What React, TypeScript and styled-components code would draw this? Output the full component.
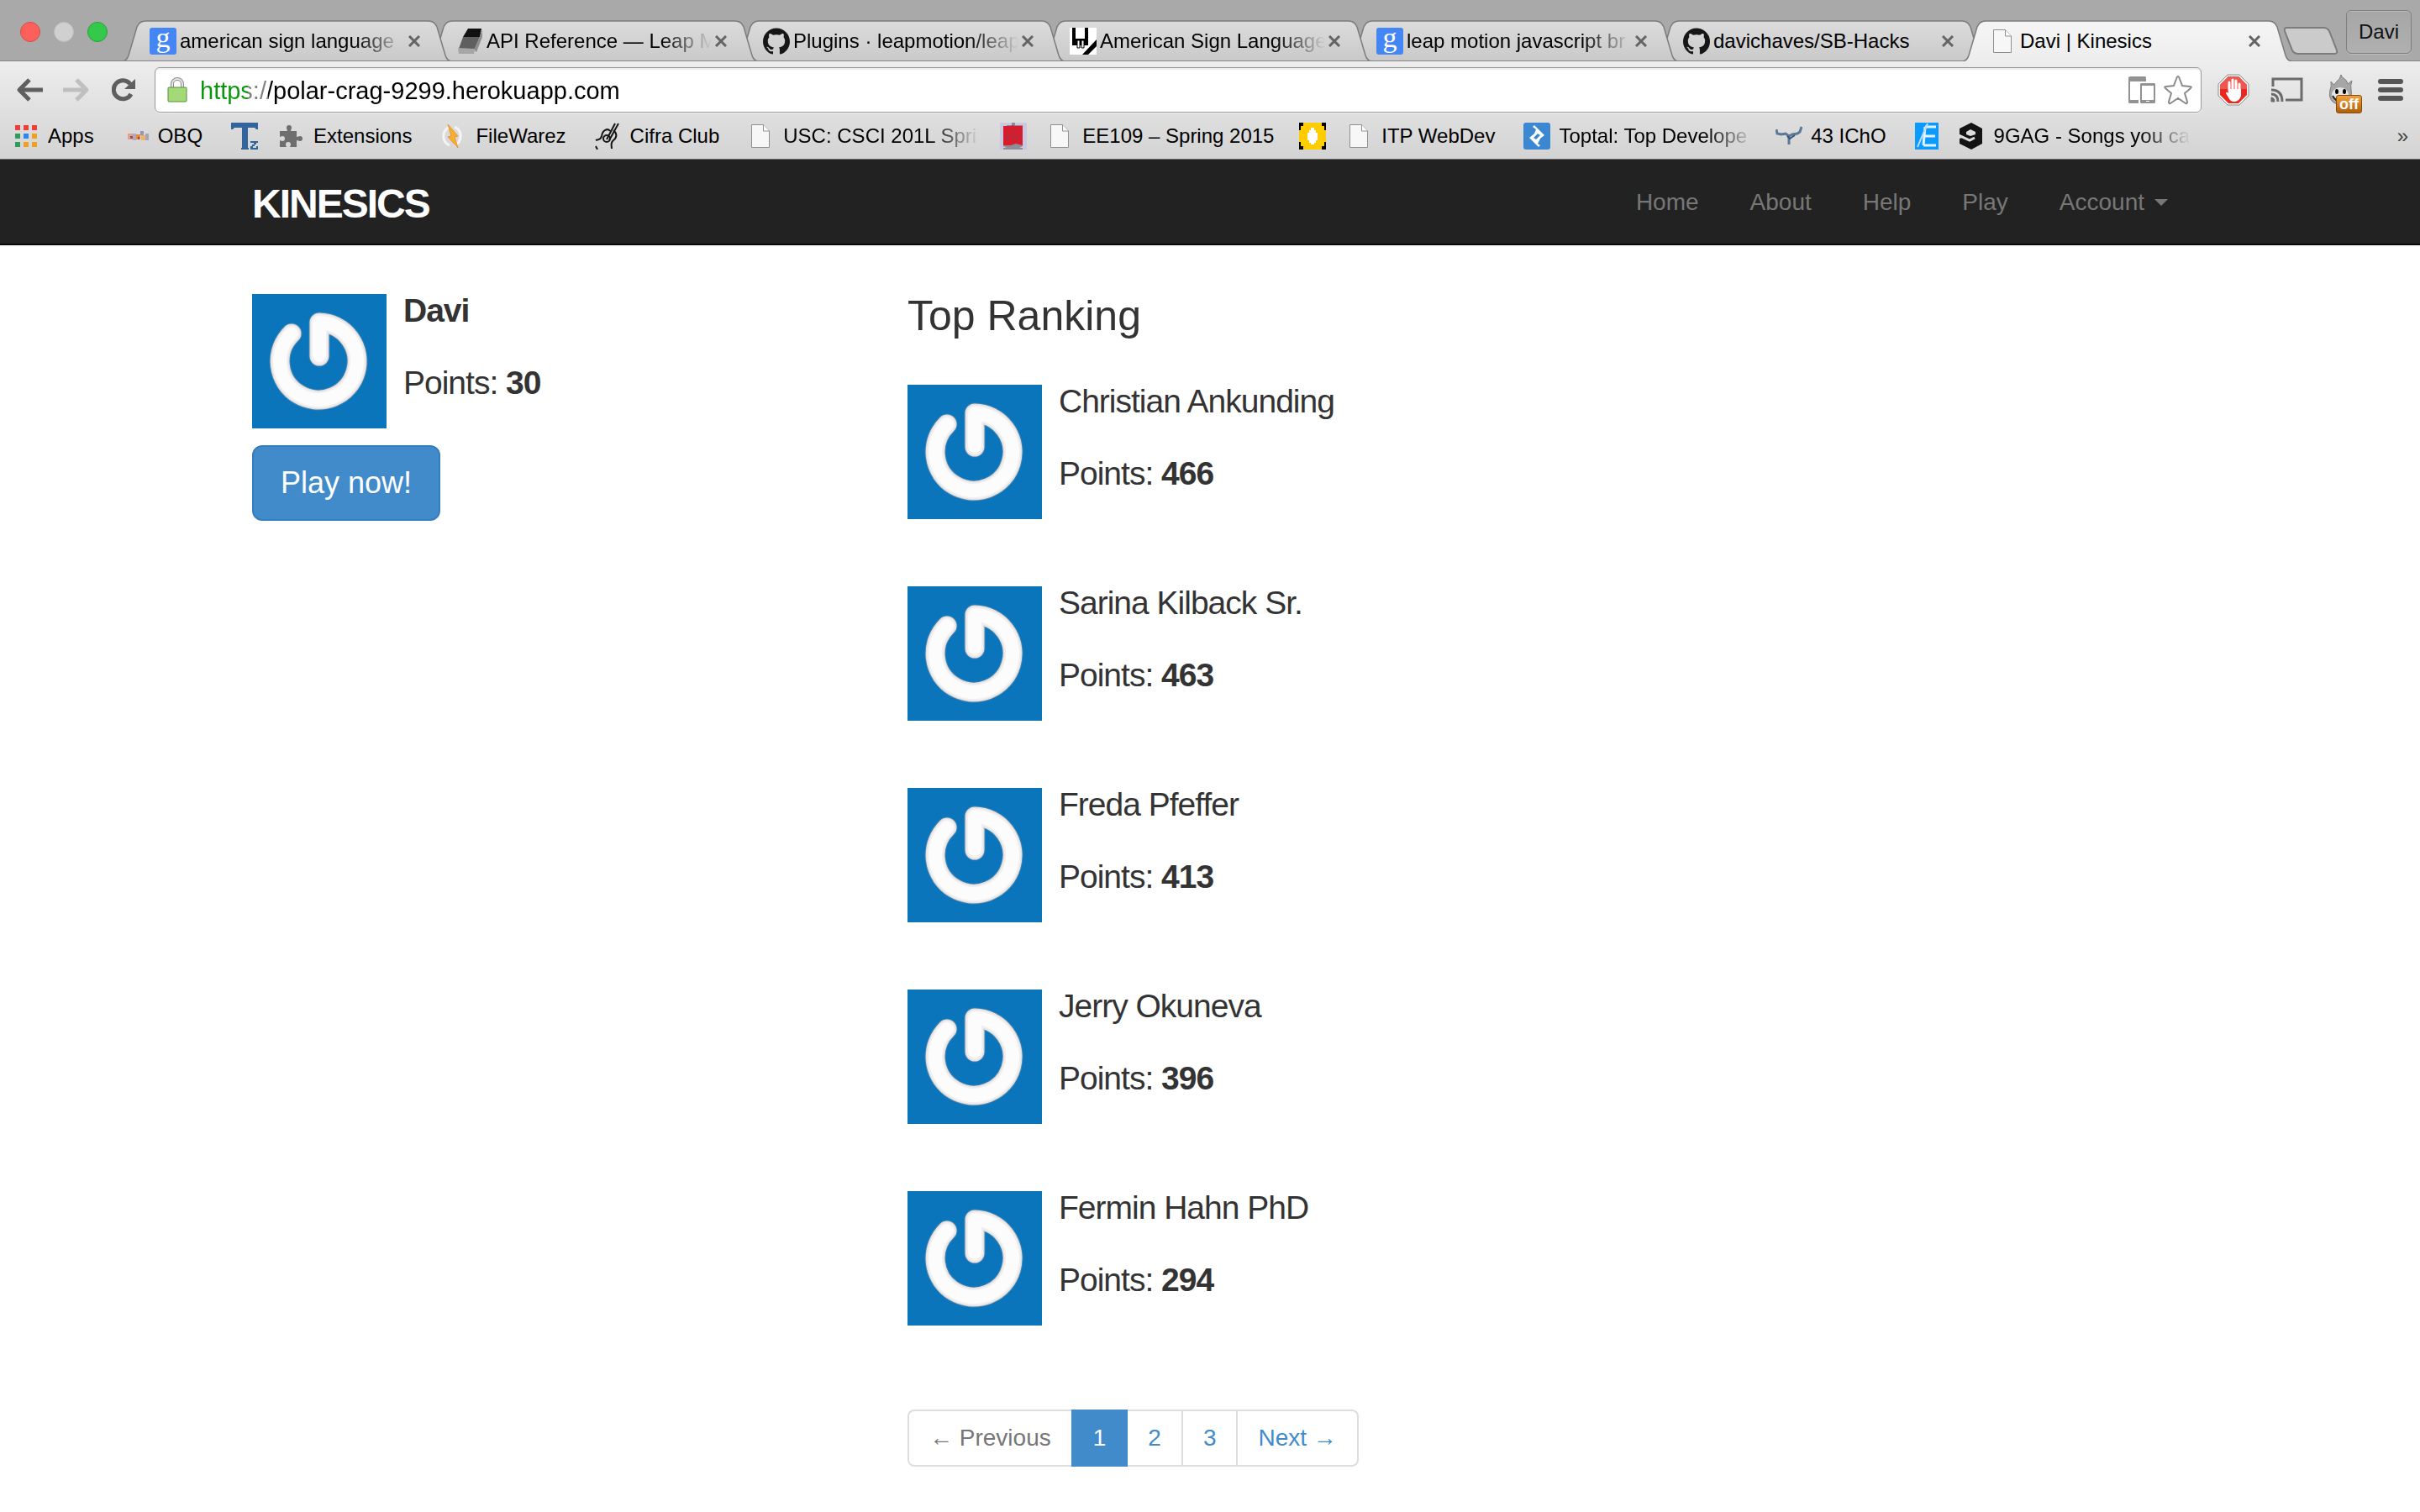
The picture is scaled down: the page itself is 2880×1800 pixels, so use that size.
import React from "react";
import styled, { createGlobalStyle, css } from "styled-components";

const GlobalStyle = createGlobalStyle`
  *, *::before, *::after { box-sizing: border-box; }
  body {
    margin: 0;
    background: #fff;
    color: #333;
    font-family: "Liberation Sans", Arial, sans-serif;
    font-size: 28px;
    line-height: 40px;
  }
  a { color: inherit; text-decoration: none; }
  button, input { font: inherit; color: inherit; }
  h1, h2, p, ul, ol { margin: 0; padding: 0; font-weight: normal; }
  ul, ol { list-style: none; }
  svg { display: block; flex: none; }
`;

/* ---------- Browser window: tab strip ---------- */

const TabStrip = styled.header`
  position: relative;
  display: flex;
  height: 73px;
  padding-right: 10px;
  background: #a9a9a9;
  font-size: 24px;
  line-height: 28px;
  &::after {
    content: "";
    position: absolute;
    left: 0;
    right: 0;
    bottom: 0;
    height: 1px;
    background: #858585;
    z-index: 10;
  }
`;

const WindowControls = styled.div`
  display: flex;
  gap: 16px;
  padding: 26px 18px 0 24px;
`;

const WindowButton = styled.button<{ $fill: string; $edge: string }>`
  width: 24px;
  height: 24px;
  padding: 0;
  border: 1px solid ${(p) => p.$edge};
  border-radius: 50%;
  background: ${(p) => p.$fill};
`;

const Tabs = styled.div`
  display: flex;
  flex: 0 1 2581px;
  min-width: 0;
  padding-top: 24px;
`;

const TabBox = styled.div<{ $order: number }>`
  position: relative;
  display: flex;
  align-items: center;
  flex: 1 1 0;
  min-width: 0;
  height: 49px;
  padding: 0 37px 0 32px;
  z-index: ${(p) => p.$order};
  & + & { margin-left: -26px; }
`;

const TabOutline = styled.svg`
  position: absolute;
  inset: 0;
  width: 100%;
  height: 100%;
  z-index: -1;
`;

const fade = css`
  mask-image: linear-gradient(to right, #000 calc(100% - 60px), transparent);
`;

const TabTitle = styled.span<{ $faded?: boolean }>`
  flex: 1;
  min-width: 0;
  margin: 0 4px 0 4px;
  overflow: hidden;
  white-space: nowrap;
  color: #000;
  ${(p) => p.$faded && fade}
`;

const TabClose = styled.button`
  flex: none;
  width: 14px;
  padding: 0;
  border: 0;
  background: none;
`;

const NewTab = styled.button`
  align-self: flex-start;
  flex: none;
  margin: 32px 8px 0 -10px;
  padding: 0;
  border: 0;
  background: none;
`;

const ProfileButton = styled.button`
  flex: none;
  align-self: flex-start;
  height: 52px;
  margin-top: 12px;
  margin-left: auto;
  padding: 0 14px;
  border: 1px solid #7e7e7e;
  border-radius: 6px;
  background: linear-gradient(#a6a6a6, #b0b0b0);
  color: #111;
  box-shadow: inset 0 1px 0 #bcbcbc, 0 1px 0 #bcbcbc;
`;

/* ---------- Browser window: toolbar ---------- */

const Chrome = styled.div`
  background: linear-gradient(#ededed, #d3d3d3);
  border-bottom: 1px solid #6d6d6d;
`;

const Toolbar = styled.div`
  display: flex;
  align-items: center;
  padding: 7px 20px 2px 18px;
`;

const HistoryButtons = styled.div`
  display: flex;
  gap: 22px;
  margin-right: 20px;
`;

const IconButton = styled.button<{ $size: number }>`
  position: relative;
  display: grid;
  place-items: center;
  flex: none;
  width: ${(p) => p.$size}px;
  height: 40px;
  padding: 0;
  border: 0;
  background: none;
`;

const Omnibox = styled.div`
  display: flex;
  align-items: center;
  flex: 1;
  min-width: 0;
  height: 54px;
  padding: 0 4px 0 14px;
  border: 1px solid #999;
  border-radius: 6px;
  background: #fff;
  box-shadow: inset 0 2px 1px #ededed, 0 1px 0 #f2f2f2;
`;

const UrlInput = styled.input`
  flex: 1;
  min-width: 0;
  height: 40px;
  margin-left: 15px;
  padding: 2px 0 0;
  border: 0;
  outline: 0;
  font-size: 29px;
  color: transparent;
  background: linear-gradient(to right, #0a960a 57px, #808080 57px 81px, #000 81px);
  background-clip: text;
`;

const Extensions = styled.div`
  display: flex;
  gap: 24px;
  margin-left: 18px;
`;

const OffBadge = styled.span`
  position: absolute;
  left: 14px;
  top: 26px;
  height: 22px;
  padding: 0 3px;
  border: 1px solid #8a4a05;
  border-radius: 3px;
  background: linear-gradient(#f3a13c, #b15f08);
  color: #fff;
  font-size: 18px;
  font-weight: bold;
  line-height: 20px;
`;

const BookmarkBar = styled.nav`
  display: flex;
  align-items: center;
  gap: 24px;
  height: 53px;
  padding: 0 14px 2px 15px;
  color: #000;
  font-size: 24px;
  line-height: 30px;
`;

const BookmarkLink = styled.a`
  display: flex;
  align-items: center;
  flex: none;
  gap: 10px;
`;

const BookmarkLabel = styled.span<{ $faded?: boolean }>`
  max-width: 234px;
  padding-right: 10px;
  overflow: hidden;
  white-space: nowrap;
  ${(p) => p.$faded && fade}
`;

const MoreBookmarks = styled.button`
  margin-left: auto;
  padding: 0;
  border: 0;
  background: none;
  color: #444;
`;

/* ---------- Site icons ---------- */

const GoogleTile = styled.span`
  display: block;
  flex: none;
  width: 32px;
  height: 32px;
  border-radius: 3px;
  background: #4486f4;
  color: #fff;
  font-family: "Liberation Serif", serif;
  font-size: 34px;
  line-height: 24px;
  text-align: center;
`;

const GoogleIcon = () => <GoogleTile aria-hidden>g</GoogleTile>;

const LeapIcon = () => (
  <svg width="32" height="32" viewBox="0 0 32 32">
    <path d="M14 1h16l-2 10H8z" fill="#111" />
    <path d="M8 11h20l-6 14H3z" fill="#5f5f5f" />
    <path d="M28 11l3-9v9l-7 18-3-3z" fill="#8d8d8d" />
    <path d="M2 24l20 1-1 6H3z" fill="#a6a6a6" />
  </svg>
);

const GithubIcon = () => (
  <svg width="32" height="32" viewBox="0 0 24 24" fill="#161616">
    <path d="M12 .297c-6.63 0-12 5.373-12 12 0 5.303 3.438 9.8 8.205 11.385.6.113.82-.258.82-.577 0-.285-.01-1.04-.015-2.04-3.338.724-4.042-1.61-4.042-1.61C4.422 18.07 3.633 17.7 3.633 17.7c-1.087-.744.084-.729.084-.729 1.205.084 1.838 1.236 1.838 1.236 1.07 1.835 2.809 1.305 3.495.998.108-.776.417-1.305.76-1.605-2.665-.3-5.466-1.332-5.466-5.93 0-1.31.465-2.38 1.235-3.22-.135-.303-.54-1.523.105-3.176 0 0 1.005-.322 3.3 1.23.96-.267 1.98-.399 3-.405 1.02.006 2.04.138 3 .405 2.28-1.552 3.285-1.23 3.285-1.23.645 1.653.24 2.873.12 3.176.765.84 1.23 1.91 1.23 3.22 0 4.61-2.805 5.625-5.475 5.92.42.36.81 1.096.81 2.22 0 1.606-.015 2.896-.015 3.286 0 .315.21.69.825.57C20.565 22.092 24 17.592 24 12.297c0-6.627-5.373-12-12-12" />
  </svg>
);

const SignIcon = () => (
  <svg width="32" height="32" viewBox="0 0 32 32">
    <path d="M0 0h32v32H0z" fill="#fff" />
    <path d="M3 0h4v13h11V0h4v21H3z" />
    <path d="M9 0h7v12H9z" fill="#fff" />
    <path d="M9 15h3v9H9zM14 15h3v9h-3z" fill="#fff" stroke="#000" strokeWidth="1" />
    <path d="M32 14v8L22 32h-7z" />
  </svg>
);

const PageIcon = () => (
  <svg width="32" height="32" viewBox="0 0 32 32">
    <path d="M4.500 2.500h14l7 7.500v19.500h-21z" fill="#f7f7f7" stroke="#909090" />
    <path d="M18.500 2.500v7.500h7" fill="#fff" stroke="#909090" />
  </svg>
);

const AppsIcon = () => {
  const colors = ["#f23c38", "#f23c38", "#f23c38", "#2f9c5b", "#2a87f0", "#f0a020", "#2f9c5b", "#f0a020", "#f0a020"];
  return (
    <svg width="32" height="32" viewBox="0 0 32 32">
      {colors.map((c, i) => (
        <rect key={i} x={3 + (i % 3) * 10} y={3 + Math.floor(i / 3) * 10} width="6" height="6" fill={c} />
      ))}
    </svg>
  );
};

const ObqIcon = () => (
  <svg width="32" height="32" viewBox="0 0 32 32">
    <path d="M1 11h7v3H1z" fill="#e6d9cc" />
    <path d="M6 13h6v7H6z" fill="#d4a494" />
    <path d="M12 13h4v8h-4z" fill="#b5a6bb" />
    <path d="M16 14h5v6h-5z" fill="#e28e38" />
    <path d="M21 10h4v5h-4z" fill="#9b91c0" />
    <path d="M22 15h5v6h-5z" fill="#e8b665" />
    <path d="M27 13h4v8h-4z" fill="#a9a3b9" />
    <path d="M9 16h3v3H9zM18 17h2v3h-2z" fill="#b5463f" />
  </svg>
);

const TzIcon = () => (
  <svg width="32" height="32" viewBox="0 0 32 32" fill="#31659c">
    <path d="M0 0h32v8h-2l-2-2h-8v24h1v2h-9v-2h1V6H4L2 8H0z" />
    <path d="M23 22h9v2h-2v2h-2v2h-2v2h4v-2h2v4h-9v-4h2v-2h2v-2h-4z" />
  </svg>
);

const PuzzleIcon = () => (
  <svg width="32" height="32" viewBox="0 0 32 32" fill="#6e6e6e">
    <path d="M2 10h8c2 0 0-2 0-4a3 3 0 0 1 6 0c0 2-2 4 0 4h6v6c0 2 2 0 4 0a3 3 0 0 1 0 6c-2 0-4-2-4 0v7h-7c-2 0 0-1 0-3a3 3 0 0 0-6 0c0 2 2 3 0 3H2v-7c0-2 1 0 3 0a3 3 0 0 0 0-6c-2 0-3 2-3 0z" />
  </svg>
);

const FileWarezIcon = () => (
  <svg width="32" height="32" viewBox="0 0 32 32">
    <path d="M11 5a12 12 0 0 0 0 22M17 5a12 12 0 0 1 0 22" fill="none" stroke="#f4f4f4" strokeWidth="3" />
    <path d="M9 2l12 14-4 1 4 13L9 17l4-1z" fill="#f8b02c" stroke="#e9953a" />
  </svg>
);

const GuitarIcon = () => (
  <svg width="32" height="32" viewBox="0 0 32 32" fill="none" stroke="#161616" strokeWidth="2">
    <path d="M1 21c2-1 6 0 7-5 1-7 7-10 10-6M14 20l10-19M17 21l11-20M22 9c5 4 4 9 0 12-4 3-2 6-2 10M1 28l2 4" />
    <circle cx="14" cy="19" r="4" />
  </svg>
);

const BigBangIcon = () => (
  <svg width="32" height="32" viewBox="0 0 32 32">
    <path d="M0 0h32v32H0z" fill="#c9c9df" />
    <path d="M8 3h6V0h4v3h9v25l-4 2h4v2H4v-2h4l-4-2z" fill="#8d8d96" />
    <path d="M4 4h9l2-1 3 1h9v23l-8-2-6 2H4z" fill="#db1a2c" />
    <path d="M9 7v4M16 5v9M22 8v4M9 13v2M9 18v4M15 18v7M21 18v6M4 16h23" stroke="#8f3a4c" strokeWidth="1" />
  </svg>
);

const YellowIcon = () => (
  <svg width="32" height="32" viewBox="0 0 32 32">
    <path d="M0 0h32v32H0z" />
    <path d="M5 0h22v4h3v5h2v14h-2v5h-3v4H5v-4H2v-5H0V9h2V4h3z" fill="#fc0" />
    <path d="M14 6h4v3h2v3h2v9h-2v3h-2v2h-4v-2h-2v-3h-2v-9h2V9h2z" fill="#fff" />
  </svg>
);

const ToptalIcon = () => (
  <svg width="32" height="32" viewBox="0 0 32 32">
    <rect width="32" height="32" rx="3" fill="#3c87d2" />
    <path d="M13 3l12 12-5 4-3 6 3 2-2 2L7 18l6-5 2-5-4-3zM17 13l-5 5 3 2 5-5z" fill="#fff" fillRule="evenodd" />
  </svg>
);

const ChemistryIcon = () => (
  <svg width="32" height="32" viewBox="0 0 32 32">
    <path d="M1 8l1 5 5 1 5-1 4 3 4-2 6-1 3-2 2-6M16 16v10" fill="none" stroke="#5d7797" strokeWidth="3" />
    <path d="M14 16l3 3 6-4" fill="none" stroke="#36557e" strokeWidth="2" />
  </svg>
);

const BlueEIcon = () => (
  <svg width="28" height="32" viewBox="0 0 28 32">
    <path d="M0 0h28v32H0z" fill="#0b9bff" />
    <path d="M12 5h13M10 16h14M10 27h15M12 5l-2 22" stroke="#e4f4ff" strokeWidth="3" />
    <path d="M15 1L3 29" stroke="#b9ddfb" strokeWidth="2" />
  </svg>
);

const NineGagIcon = () => (
  <svg width="32" height="32" viewBox="0 0 32 32">
    <path d="M15 0l13 7v18l-13 7L1 25v-6l6-2 7 5 5-3-5 2L1 14V7z" fill="#141414" />
    <path d="M14 8l6 3v3l-6 2-5-2v-3z" fill="#dcdcdc" />
    <path d="M0 15l13 6 6-3" fill="none" stroke="#dcdcdc" strokeWidth="3" />
  </svg>
);

/* ---------- Toolbar drawings ---------- */

const ArrowIcon = ({ color, flip }: { color: string; flip?: boolean }) => (
  <svg width="32" height="28" viewBox="0 0 32 28" fill="none" stroke={color} strokeWidth="5">
    <path d={flip ? "M0 14h28M16 2l12 12-12 12" : "M32 14H4M16 2L4 14l12 12"} strokeLinejoin="round" />
  </svg>
);

const ReloadIcon = () => (
  <svg width="28" height="28" viewBox="0 0 28 28">
    <path d="M23 19a11 11 0 1 1-1-12" fill="none" stroke="#5f5f5f" strokeWidth="5" />
    <path d="M28 1v12H15z" fill="#5f5f5f" />
  </svg>
);

const LockIcon = () => (
  <svg width="24" height="30" viewBox="0 0 24 30">
    <path d="M6 13V8a6 6 0 0 1 12 0v5" fill="none" stroke="#8b8b8b" strokeWidth="4" />
    <path d="M6 13V8a6 6 0 0 1 12 0v5" fill="none" stroke="#e4e4e4" strokeWidth="2" />
    <rect x="1" y="12" width="22" height="17" rx="1" fill="#a3d977" stroke="#57923b" />
  </svg>
);

const DevicesIcon = () => (
  <svg width="32" height="32" viewBox="0 0 32 32" fill="#929292">
    <path d="M2 0h18l1 1v5H2v22h10v4H1l-1-1V1z" />
    <path d="M15 8h16l1 1v22l-1 1H15l-1-1V9zM16 11v17h14V11zM21 29v1h4v-1z" fillRule="evenodd" />
  </svg>
);

const StarIcon = () => (
  <svg width="36" height="36" viewBox="0 0 36 36">
    <path d="M18 2q1 0 2 3l3 8 9 1q3 0 1 2l-7 6 3 10q0 3-2 2l-9-6-9 6q-2 1-2-2l3-10-7-6q-2-2 1-2l9-1 3-8q1-3 2-3z" fill="#fff" stroke="#8a8a8a" strokeWidth="2" />
  </svg>
);

const AdblockIcon = () => (
  <svg width="38" height="38" viewBox="0 0 38 38">
    <path d="M12 1h14l11 11v14L26 37H12L1 26V12z" fill="#f7f7f7" stroke="#8c8c8c" />
    <path d="M13 3h12l10 10v12L25 35H13L3 25V13z" fill="#e9281f" />
    <path d="M13 3h12l10 10v5H3v-5z" fill="#ee5750" />
    <path d="M14 20V10M18 19V7M22 19V8M26 21V12" stroke="#fff" strokeWidth="3" strokeLinecap="round" />
    <path d="M13 18h15v8q-2 7-8 7-5 0-7-5l-3-5q1-3 3 0z" fill="#fff" />
  </svg>
);

const CastIcon = () => (
  <svg width="40" height="30" viewBox="0 0 40 30" fill="none" stroke="#6b6b6b">
    <path d="M3 11V2h34v25H18" strokeWidth="3" />
    <path d="M1 15q13 0 13 14M1 20q8 0 8 9" strokeWidth="3" />
    <path d="M1 24h1q3 1 3 5H1z" fill="#6b6b6b" strokeWidth="1" />
  </svg>
);

const FlameIcon = () => (
  <svg width="30" height="38" viewBox="0 0 30 38">
    <path d="M15 1q-1 5-5 8-2 2-3 4-2-1-4-4 1 6-1 10-3 13 8 17 6 2 12-2 7-5 5-15-1-5 1-11l-5 4q-1-5-5-7-2-1-3-4z" fill="#a6a6a6" stroke="#7e7e7e" />
    <ellipse cx="14" cy="25" rx="10" ry="9" fill="#e4e4e4" />
    <ellipse cx="10" cy="21" rx="2" ry="3" />
    <ellipse cx="19" cy="21" rx="2" ry="3" />
    <path d="M5 26q4 8 12 7" fill="none" stroke="#222" strokeWidth="2" />
  </svg>
);

const MenuIcon = () => (
  <svg width="30" height="28" viewBox="0 0 30 28" fill="#555">
    <rect width="30" height="6" y="1" rx="3" />
    <rect width="30" height="6" y="11" rx="3" />
    <rect width="30" height="6" y="21" rx="3" />
  </svg>
);

/* ---------- Site ---------- */

const Container = styled.div`
  width: 100%;
  max-width: 2340px;
  margin: 0 auto;
  padding: 0 30px;
`;

const Navbar = styled.div`
  background: #222;
  border-bottom: 2px solid #080808;
`;

const NavbarRow = styled(Container)`
  display: flex;
  justify-content: space-between;
  align-items: center;
  height: 100px;
`;

const Logo = styled.a`
  padding-top: 6px;
  color: #fff;
  font-size: 48px;
  font-weight: bold;
  letter-spacing: -2px;
  line-height: 48px;
  text-transform: uppercase;
`;

const NavList = styled.ul`
  display: flex;
  gap: 61px;
  padding-top: 1px;
  color: #777;
`;

const AccountButton = styled.button`
  display: flex;
  align-items: center;
  gap: 12px;
  padding: 0;
  border: 0;
  background: none;
  &::after {
    content: "";
    border: 8px solid transparent;
    border-top-color: currentColor;
    border-bottom-width: 0;
  }
`;

const Columns = styled(Container)`
  display: grid;
  grid-template-columns: 1fr 2fr;
  padding: 58px 0 0;
  & > * { padding: 0 30px; }
`;

const UserRow = styled.div`
  display: flex;
  gap: 20px;
`;

const UserText = styled.div`
  display: flex;
  flex-direction: column;
  gap: 46px;
  font-size: 39px;
  letter-spacing: -1px;
  line-height: 40px;
`;

const UserName = styled.h2<{ $bold?: boolean }>`
  font-size: 39px;
  font-weight: ${(p) => (p.$bold ? "bold" : "normal")};
`;

const PlayButton = styled.button`
  margin-top: 20px;
  height: 90px;
  padding: 0 32px;
  border: 2px solid #357ebd;
  border-radius: 12px;
  background: #428bca;
  color: #fff;
  font-size: 36px;
`;

const RankingTitle = styled.h1`
  margin-bottom: 56px;
  font-size: 50px;
  font-weight: 500;
  line-height: 52px;
`;

const RankingList = styled.ol`
  display: grid;
  gap: 80px;
  margin-bottom: 100px;
`;

const Pagination = styled.ul`
  display: flex;
`;

const PageLink = styled.a<{ $active?: boolean; $muted?: boolean }>`
  display: block;
  padding: 12px 24px;
  margin-left: -2px;
  border: 2px solid ${(p) => (p.$active ? "#428bca" : "#ddd")};
  background: ${(p) => (p.$active ? "#428bca" : "#fff")};
  color: ${(p) => (p.$active ? "#fff" : p.$muted ? "#777" : "#428bca")};
  position: relative;
  z-index: ${(p) => (p.$active ? 1 : 0)};
  li:first-child > & { margin-left: 0; border-radius: 8px 0 0 8px; }
  li:last-child > & { border-radius: 0 8px 8px 0; }
`;

const Avatar = () => (
  <svg width="160" height="160" viewBox="0 0 160 160" role="img" aria-label="Avatar">
    <path d="M0 0h160v160H0z" fill="#0a75ba" />
    <g fill="none" strokeLinecap="round" strokeLinejoin="round">
      <path d="M80 74V34A46 46 0 1 1 47 47" stroke="#3c83b5" strokeWidth="25" />
      <path d="M80 74V34A46 46 0 1 1 47 47" stroke="#e2dfde" strokeWidth="23" />
      <path d="M80 74V34A46 46 0 1 1 47 47" stroke="#f1efef" strokeWidth="20" />
      <path d="M80 73V34A46 46 0 1 1 47 47" stroke="#fcfcfc" strokeWidth="16" />
    </g>
  </svg>
);

const tabs = [
  { title: "american sign language", icon: <GoogleIcon />, faded: true },
  { title: "API Reference — Leap M", icon: <LeapIcon />, faded: true },
  { title: "Plugins · leapmotion/leap", icon: <GithubIcon />, faded: true },
  { title: "American Sign Language", icon: <SignIcon />, faded: true },
  { title: "leap motion javascript br", icon: <GoogleIcon />, faded: true },
  { title: "davichaves/SB-Hacks", icon: <GithubIcon /> },
  { title: "Davi | Kinesics", icon: <PageIcon />, active: true },
];

const bookmarks = [
  { name: "Apps", icon: <AppsIcon />, label: "Apps" },
  { name: "OBQ", icon: <ObqIcon />, label: "OBQ" },
  { name: "Tz", icon: <TzIcon /> },
  { name: "Extensions", icon: <PuzzleIcon />, label: "Extensions" },
  { name: "FileWarez", icon: <FileWarezIcon />, label: "FileWarez" },
  { name: "Cifra Club", icon: <GuitarIcon />, label: "Cifra Club" },
  { name: "USC", icon: <PageIcon />, label: "USC: CSCI 201L Spri", faded: true },
  { name: "Big Bang", icon: <BigBangIcon /> },
  { name: "EE109", icon: <PageIcon />, label: "EE109 – Spring 2015" },
  { name: "Yellow", icon: <YellowIcon /> },
  { name: "ITP WebDev", icon: <PageIcon />, label: "ITP WebDev" },
  { name: "Toptal", icon: <ToptalIcon />, label: "Toptal: Top Develope", faded: true },
  { name: "43 IChO", icon: <ChemistryIcon />, label: "43 IChO" },
  { name: "E", icon: <BlueEIcon /> },
  { name: "9GAG", icon: <NineGagIcon />, label: "9GAG - Songs you ca", faded: true },
];

const ranking = [
  { name: "Christian Ankunding", points: 466 },
  { name: "Sarina Kilback Sr.", points: 463 },
  { name: "Freda Pfeffer", points: 413 },
  { name: "Jerry Okuneva", points: 396 },
  { name: "Fermin Hahn PhD", points: 294 },
];

const Tab = ({ title, icon, faded, active, order }: {
  title: string; icon: React.ReactNode; faded?: boolean; active?: boolean; order: number;
}) => {
  const fillId = active ? "tab-active" : "tab-idle";
  return (
    <TabBox $order={order}>
      <TabOutline viewBox="0 0 391 49" preserveAspectRatio="none">
        <defs>
          <linearGradient id={fillId} x1="0" y1="0" x2="0" y2="1">
            <stop offset="0" stopColor={active ? "#f5f5f5" : "#dcdcdd"} />
            <stop offset="1" stopColor={active ? "#ededed" : "#c9c9ca"} />
          </linearGradient>
        </defs>
        <path
          d="M0 49Q5 48 7 42L17 8Q20 1 27 1H364Q371 1 374 8L384 42Q386 48 391 49"
          fill={`url(#${fillId})`} stroke="#7c7c7c" strokeWidth="1.500"
        />
      </TabOutline>
      {icon}
      <TabTitle $faded={faded}>{title}</TabTitle>
      <TabClose aria-label={`Close ${title}`}>
        <svg width="14" height="14" viewBox="0 0 14 14" stroke="#636363" strokeWidth="3">
          <path d="M1 1l12 12M13 1L1 13" />
        </svg>
      </TabClose>
    </TabBox>
  );
};

const User = ({ name, points, bold }: { name: string; points: number; bold?: boolean }) => (
  <UserRow>
    <Avatar />
    <UserText>
      <UserName $bold={bold}>{name}</UserName>
      <p>Points: <b>{points}</b></p>
    </UserText>
  </UserRow>
);

export default function App() {
  return (
    <>
      <GlobalStyle />
      <TabStrip>
        <WindowControls>
          <WindowButton aria-label="Close window" $fill="#fc605b" $edge="#dd4a46" />
          <WindowButton aria-label="Minimize window" $fill="#d0d0d0" $edge="#bdbdbd" />
          <WindowButton aria-label="Zoom window" $fill="#34c94a" $edge="#25a537" />
        </WindowControls>
        <Tabs>
          {tabs.map((t, i) => (
            <Tab key={t.title} {...t} order={t.active ? 20 : 7 - i} />
          ))}
        </Tabs>
        <NewTab aria-label="New tab">
          <svg width="66" height="33" viewBox="0 0 66 33">
            <path d="M4 1H48Q53 1 55 5L64 28Q65 32 61 32H18Q13 32 11 28L2 5Q1 1 4 1Z" fill="#cbcbcc" stroke="#7c7c7c" strokeWidth="2" />
          </svg>
        </NewTab>
        <ProfileButton>Davi</ProfileButton>
      </TabStrip>

      <Chrome>
        <Toolbar>
          <HistoryButtons>
            <IconButton $size={34} aria-label="Back"><ArrowIcon color="#5f5f5f" /></IconButton>
            <IconButton $size={34} aria-label="Forward"><ArrowIcon color="#bfbfbf" flip /></IconButton>
            <IconButton $size={34} aria-label="Reload"><ReloadIcon /></IconButton>
          </HistoryButtons>
          <Omnibox>
            <LockIcon />
            <UrlInput aria-label="Address" defaultValue="https://polar-crag-9299.herokuapp.com" />
            <IconButton $size={40} aria-label="Devices"><DevicesIcon /></IconButton>
            <IconButton $size={46} aria-label="Bookmark this page"><StarIcon /></IconButton>
          </Omnibox>
          <Extensions>
            <IconButton $size={40} aria-label="Adblock"><AdblockIcon /></IconButton>
            <IconButton $size={40} aria-label="Cast"><CastIcon /></IconButton>
            <IconButton $size={40} aria-label="Hola"><FlameIcon /><OffBadge>off</OffBadge></IconButton>
            <IconButton $size={30} aria-label="Menu"><MenuIcon /></IconButton>
          </Extensions>
        </Toolbar>
        <BookmarkBar aria-label="Bookmarks">
          {bookmarks.map((b) => (
            <BookmarkLink key={b.name} href="#" aria-label={b.name}>
              {b.icon}
              {b.label && <BookmarkLabel $faded={b.faded}>{b.label}</BookmarkLabel>}
            </BookmarkLink>
          ))}
          <MoreBookmarks aria-label="More bookmarks">»</MoreBookmarks>
        </BookmarkBar>
      </Chrome>

      <Navbar>
        <NavbarRow>
          <Logo href="#">Kinesics</Logo>
          <NavList>
            <li><a href="#">Home</a></li>
            <li><a href="#">About</a></li>
            <li><a href="#">Help</a></li>
            <li><a href="#">Play</a></li>
            <li><AccountButton>Account</AccountButton></li>
          </NavList>
        </NavbarRow>
      </Navbar>

      <Columns as="main">
        <aside>
          <User name="Davi" points={30} bold />
          <PlayButton>Play now!</PlayButton>
        </aside>
        <section>
          <RankingTitle>Top Ranking</RankingTitle>
          <RankingList>
            {ranking.map((u) => (
              <li key={u.name}><User {...u} /></li>
            ))}
          </RankingList>
          <Pagination>
            <li><PageLink as="span" $muted>← Previous</PageLink></li>
            <li><PageLink href="#" $active>1</PageLink></li>
            <li><PageLink href="#">2</PageLink></li>
            <li><PageLink href="#">3</PageLink></li>
            <li><PageLink href="#">Next →</PageLink></li>
          </Pagination>
        </section>
      </Columns>
    </>
  );
}
